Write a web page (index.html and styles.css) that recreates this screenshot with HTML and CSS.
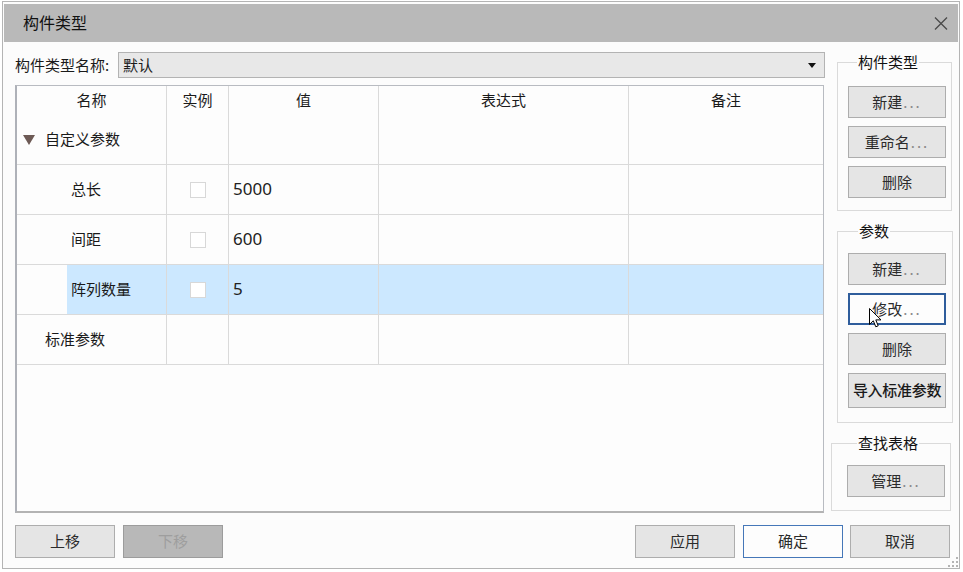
FILE: index.html
```html
<!DOCTYPE html>
<html lang="zh">
<head>
<meta charset="utf-8">
<title>构件类型</title>
<link rel="stylesheet" href="styles.css">
</head>
<body>
<div class="dialog">
  <div class="titlebar">
    <span class="title">构件类型</span>
    <svg class="close" width="14" height="13" viewBox="0 0 14 13"><path d="M1 0.5 L13 12.5 M13 0.5 L1 12.5" stroke="#4a4a4a" stroke-width="1.3" fill="none"/></svg>
  </div>
  <div class="body">
    <div class="main">
      <div class="left">
        <div class="name-row">
          <span class="name-label">构件类型名称:</span>
          <div class="combo">
            <span class="combo-text">默认</span>
            <svg class="combo-arrow" width="8" height="5" viewBox="0 0 8 5"><path d="M0 0 L8 0 L4 5 Z" fill="#111"/></svg>
          </div>
        </div>
        <div class="grid">
          <div class="row head">
            <div class="cell">名称</div>
            <div class="cell">实例</div>
            <div class="cell">值</div>
            <div class="cell">表达式</div>
            <div class="cell last">备注</div>
          </div>
          <div class="row">
            <div class="cell c-group"><span class="tri"></span>自定义参数</div>
            <div class="cell"></div>
            <div class="cell"></div>
            <div class="cell"></div>
            <div class="cell last"></div>
          </div>
          <div class="row">
            <div class="cell c-child"><span class="name-inner">总长</span></div>
            <div class="cell c-check"><span class="check"></span></div>
            <div class="cell c-val">5000</div>
            <div class="cell"></div>
            <div class="cell last"></div>
          </div>
          <div class="row">
            <div class="cell c-child"><span class="name-inner">间距</span></div>
            <div class="cell c-check"><span class="check"></span></div>
            <div class="cell c-val">600</div>
            <div class="cell"></div>
            <div class="cell last"></div>
          </div>
          <div class="row selected">
            <div class="cell c-child"><span class="name-inner">阵列数量</span></div>
            <div class="cell c-check"><span class="check"></span></div>
            <div class="cell c-val">5</div>
            <div class="cell"></div>
            <div class="cell last"></div>
          </div>
          <div class="row">
            <div class="cell c-std">标准参数</div>
            <div class="cell"></div>
            <div class="cell"></div>
            <div class="cell"></div>
            <div class="cell last"></div>
          </div>
        </div>
      </div>
      <div class="right">
        <fieldset class="grp g1">
          <legend>构件类型</legend>
          <button class="btn gbtn">新建<span class="dots">...</span></button>
          <button class="btn gbtn">重命名<span class="dots">...</span></button>
          <button class="btn gbtn">删除</button>
        </fieldset>
        <fieldset class="grp g2">
          <legend>参数</legend>
          <button class="btn gbtn">新建<span class="dots">...</span></button>
          <button class="btn gbtn focus">修改<span class="dots">...</span>
            <svg class="cursor" width="13" height="20" viewBox="0 0 13 20"><path d="M0.5 0.5 L0.5 16.5 L4.3 12.8 L6.8 18.8 L9.2 17.8 L6.8 11.9 L12 11.9 Z" fill="#fff" stroke="#000" stroke-width="1" stroke-linejoin="miter"/></svg>
          </button>
          <button class="btn gbtn">删除</button>
          <button class="btn gbtn import">导入标准参数</button>
        </fieldset>
        <fieldset class="grp g3">
          <legend>查找表格</legend>
          <button class="btn gbtn">管理<span class="dots">...</span></button>
        </fieldset>
      </div>
    </div>
    <div class="footer">
      <button class="btn fbtn">上移</button>
      <button class="btn fbtn disabled">下移</button>
      <button class="btn fbtn apply">应用</button>
      <button class="btn fbtn ok">确定</button>
      <button class="btn fbtn cancel">取消</button>
    </div>
  </div>
  <svg class="grip" width="10" height="10" viewBox="0 0 10 10">
    <rect x="8" y="0" width="2" height="2" fill="#b4b4b4"/>
    <rect x="4" y="4" width="2" height="2" fill="#b4b4b4"/>
    <rect x="8" y="4" width="2" height="2" fill="#b4b4b4"/>
    <rect x="0" y="8" width="2" height="2" fill="#b4b4b4"/>
    <rect x="4" y="8" width="2" height="2" fill="#b4b4b4"/>
    <rect x="8" y="8" width="2" height="2" fill="#b4b4b4"/>
  </svg>
</div>
</body>
</html>
```
FILE: styles.css
```css
* { box-sizing: border-box; }
html, body { margin: 0; padding: 0; background: #ffffff; }
body {
  font-family: "Noto Sans CJK SC", "Noto Sans", sans-serif;
  font-size: 15px;
  color: #1a1a1a;
}
.dialog {
  position: relative;
  margin: 1px 0 0 2px;
  width: 958px;
  height: 568px;
  border: 1px solid #b4b4b4;
  padding: 2px 1px 0 1px;
  background: #fcfcfc;
}
.titlebar {
  height: 38px;
  background: #b9b9b9;
  display: flex;
  align-items: center;
  padding-left: 19px;
  padding-right: 10px;
}
.title { font-size: 16px; color: #111; line-height: 20px; padding-bottom: 2px; }
.close { margin-left: auto; margin-top: 1px; }
.body { padding: 10px 5px 10px 11px; }
.main { display: flex; gap: 7px; }
.left { width: 809px; }
.name-row { display: flex; align-items: center; height: 26px; margin-bottom: 7px; }
.name-label { width: 103px; line-height: 20px; padding-bottom: 1px; }
.combo {
  width: 707px;
  height: 26px;
  margin-right: -1px;
  background: #e8e8e8;
  border: 1px solid #b3b3b3;
  display: flex;
  align-items: center;
  padding: 0 8px 0 4px;
}
.combo-text { line-height: 20px; padding-bottom: 1px; }
.combo-arrow { margin-left: auto; }
.grid {
  height: 428px;
  background: #fdfdfd;
  border-top: 1px solid #b8bbc1;
  border-right: 1px solid #b8bbc1;
  border-left: 2px solid #aeb1b8;
  border-bottom: 2px solid #b3b3b3;
}
.row {
  display: grid;
  grid-template-columns: 150px 62px 150px 250px 1fr;
  height: 50px;
  border-bottom: 1px solid #dadada;
}
.row.head { height: 29px; border-bottom: none; }
.cell {
  border-right: 1px solid #dadada;
  display: flex;
  align-items: center;
  line-height: 20px;
  white-space: nowrap;
  padding-bottom: 2px;
}
.cell.last { border-right: none; }
.head .cell { justify-content: center; color: #1a1a1a; }
.c-group { padding-left: 6px; }
.tri {
  width: 0; height: 0;
  border-left: 6.5px solid transparent;
  border-right: 6.5px solid transparent;
  border-top: 10px solid #6d5a55;
  margin-right: 10px;
  margin-top: 2px;
}
.c-child { padding-left: 50px; padding-bottom: 0; }
.name-inner {
  align-self: stretch;
  flex: 1;
  display: flex;
  align-items: center;
  padding-left: 4px;
  padding-bottom: 2px;
}
.c-std { padding-left: 28px; }
.c-check { justify-content: center; padding-bottom: 0; }
.check {
  width: 16px; height: 16px;
  background: #fff;
  border: 1px solid #d8d8d8;
}
.c-val { padding-left: 4px; font-family: "Noto Sans", sans-serif; font-size: 17px; color: #222; }
.selected .cell { background: #cce8ff; }
.selected .c-child { background: transparent; }
.selected .name-inner { background: #cce8ff; }

.right { width: 122px; display: flex; flex-direction: column; }
.grp {
  margin: 0;
  border: 1px solid #dadada;
  min-width: 0;
}
.grp legend {
  font-size: 15px;
  line-height: 20px;
  padding: 0 1px 1px;
  color: #111;
}
.g1 { margin-left: 6px; width: 115px; padding: 13px 0 12px 10px; }
.g1 legend { margin-left: 9px; }
.g2 { margin-left: 6px; margin-top: 10px; width: 116px; padding: 11px 0 14px 10px; }
.g2 legend { margin-left: 10px; }
.g3 { margin-top: 10px; width: 120px; padding: 11px 0 13px 15px; }
.g3 legend { margin-left: 10px; }
.btn {
  font-family: "Noto Sans CJK SC", "Noto Sans", sans-serif;
  font-size: 15px;
  color: #2b2b2b;
  background: #e5e5e5;
  border: 1px solid #adadad;
  padding: 0 0 1px;
  line-height: 20px;
  cursor: default;
}
.gbtn { display: block; width: 98px; height: 32px; position: relative; }
.gbtn + .gbtn { margin-top: 8px; }
.dots { color: #8a8a8a; letter-spacing: 2px; margin-left: 1px; }
.focus { background: #fdfdfd; border: 2px solid #2f5d9c; }
.import { height: 35px; font-weight: 500; color: #1a1a1a; letter-spacing: -0.3px; }
.cursor { position: absolute; left: 19px; top: 13px; }
.footer { display: flex; margin-top: 12px; padding-right: 3px; }
.fbtn { width: 100px; height: 33px; }
.disabled { margin-left: 8px; background: #b8b8b8; border-color: #9c9c9c; color: #9e9e9e; }
.apply { margin-left: auto; }
.ok { margin-left: 8px; background: #fdfdfd; border-color: #4577b8; }
.cancel { margin-left: 7px; }
.grip { position: absolute; right: 1px; bottom: 1px; }
```
